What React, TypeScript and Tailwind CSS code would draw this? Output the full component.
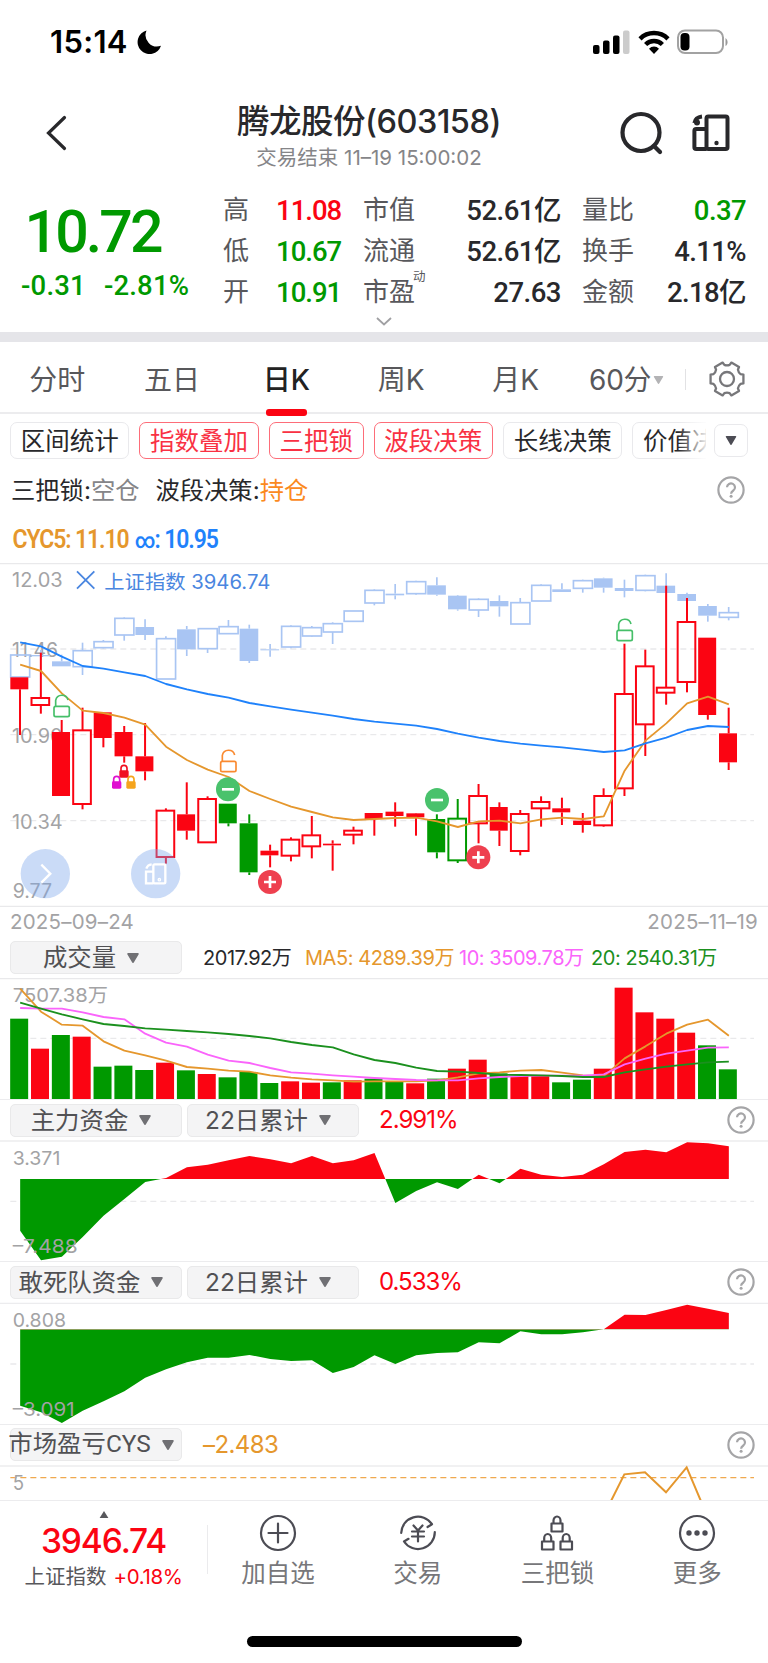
import { ReactNode } from "react";

type Candle = [kind: string, high: number, top: number, bottom: number, low: number];

// all chart coordinates are in device pixels, three to one layout pixel
const STEP = 62.53;
const cx = (i: number) => 60.5 + i * STEP;

const RED = "#fb0412";
const GREEN = "#009900";
const BLUE = "#a9c5f3";

const candles: Candle[] = [
  ["R", 352, 352, 388, 525],
  ["H", 278, 414, 435, 461],
  ["R", 480, 516, 708, 708],
  ["H", 443, 511, 732, 748],
  ["R", 457, 457, 534, 562],
  ["R", 498, 516, 589, 608],
  ["R", 489, 589, 634, 661],
  ["H", 745, 752, 891, 911],
  ["R", 667, 763, 812, 839],
  ["H", 709, 717, 847, 847],
  ["G", 731, 731, 790, 799],
  ["G", 763, 790, 937, 945],
  ["R", 854, 872, 886, 922],
  ["H", 832, 839, 887, 904],
  ["H", 768, 826, 859, 895],
  ["R", 841, 851, 856, 932],
  ["H", 800, 812, 824, 853],
  ["R", 759, 759, 777, 827],
  ["R", 727, 755, 768, 800],
  ["R", 759, 760, 772, 827],
  ["G", 763, 777, 877, 895],
  ["g", 717, 776, 901, 909],
  ["H", 672, 708, 790, 850],
  ["R", 727, 741, 812, 858],
  ["H", 750, 762, 873, 886],
  ["H", 709, 726, 745, 800],
  ["R", 713, 745, 757, 795],
  ["R", 759, 782, 795, 818],
  ["H", 685, 708, 796, 800],
  ["H", 251, 402, 685, 708],
  ["H", 269, 319, 493, 588],
  ["H", 77, 383, 398, 434],
  ["H", 114, 186, 366, 397],
  ["R", 233, 233, 465, 479],
  ["R", 443, 520, 607, 630],
];

const indexCandles: Candle[] = [
  ["H", 284, 285, 351, 351],
  ["R", 270, 285, 289, 300],
  ["R", 284, 304, 319, 319],
  ["H", 248, 272, 320, 345],
  ["H", 240, 245, 263, 265],
  ["H", 172, 175, 225, 242],
  ["R", 178, 201, 225, 240],
  ["H", 229, 236, 357, 357],
  ["R", 198, 208, 268, 288],
  ["H", 206, 206, 266, 279],
  ["H", 180, 200, 221, 221],
  ["R", 194, 206, 303, 309],
  ["R", 252, 268, 271, 290],
  ["H", 196, 199, 261, 265],
  ["H", 198, 203, 228, 230],
  ["H", 187, 191, 216, 252],
  ["H", 153, 153, 184, 184],
  ["H", 88, 91, 129, 136],
  ["R", 72, 101, 106, 118],
  ["H", 62, 65, 101, 104],
  ["R", 52, 76, 104, 107],
  ["R", 105, 107, 148, 152],
  ["H", 115, 118, 150, 171],
  ["R", 106, 123, 139, 170],
  ["H", 114, 128, 192, 192],
  ["H", 73, 76, 123, 124],
  ["R", 70, 88, 96, 96],
  ["H", 59, 62, 85, 98],
  ["R", 53, 55, 83, 98],
  ["R", 59, 84, 93, 112],
  ["H", 44, 47, 91, 94],
  ["R", 40, 77, 99, 99],
  ["R", 98, 102, 123, 123],
  ["R", 132, 138, 167, 185],
  ["H", 141, 158, 172, 181],
];

const costLine = [
  247, 259, 290, 318, 326, 337, 348, 372, 388, 402, 413, 429, 439, 449, 458, 467, 477, 485, 491,
  497, 507, 521, 533, 543, 551, 557, 562, 569, 576, 571, 550, 533, 510, 498, 501,
];
const cycLine = [
  314, 333, 400, 452, 459, 473, 494, 560, 600, 629, 651, 693, 717, 740, 756, 772, 780, 777, 774,
  773, 784, 801, 784, 782, 790, 778, 773, 777, 769, 632, 542, 490, 430, 410, 433,
];

const volumes = [
  357, 447, 406, 411, 501, 498, 511, 489, 512, 523, 533, 517, 550, 545, 549, 548, 542, 537, 547,
  551, 537, 507, 480, 521, 529, 529, 548, 540, 507, 264, 338, 357, 399, 437, 509,
];
const volumeKinds = "GRGRGGGRGRGGGRRGRGGRGRRGRRGGRRRRRGG";
const ma5 = [
  267, 336, 375, 378, 425, 453, 467, 483, 502, 507, 513, 516, 527, 534, 539, 542, 546, 545, 545,
  545, 542, 533, 521, 518, 513, 511, 519, 527, 530, 476, 440, 402, 375, 360, 408,
];
const ma10 = [
  325, 327, 327, 338, 352, 359, 402, 429, 441, 465, 483, 490, 505, 518, 522, 527, 531, 535, 538,
  541, 542, 542, 536, 532, 529, 528, 528, 528, 524, 494, 477, 462, 453, 444, 443,
];
const ma20 = [
  309, 327, 344, 359, 373, 379, 386, 390, 394, 398, 403, 409, 416, 427, 436, 443, 464, 481, 490,
  504, 514, 516, 520, 525, 526, 527, 529, 532, 532, 518, 509, 501, 494, 488, 486,
];

const mainFund = [
  422, 511, 500, 441, 377, 327, 276, 264, 232, 224, 211, 198, 208, 220, 198, 220, 211, 189, 339,
  303, 277, 297, 254, 280, 236, 254, 261, 254, 223, 186, 179, 187, 157, 160, 169,
];
const braveFund = [
  437, 457, 489, 452, 424, 394, 353, 328, 307, 293, 293, 285, 297, 303, 301, 339, 321, 286, 312,
  286, 279, 277, 247, 250, 214, 223, 223, 217, 208, 164, 165, 150, 134, 146, 159,
];

const linePoints = (data: number[]) => data.map((y, i) => `${cx(i)},${y}`).join(" ");

const Line = ({ data, color }: { data: number[]; color: string }) => (
  <polyline
    points={linePoints(data)}
    fill="none"
    stroke={color}
    strokeWidth={5.5}
    strokeLinejoin="round"
  />
);

const Dash = ({ y, color = "#e9e9eb" }: { y: number; color?: string }) => (
  <line x1={31} x2={2262} y1={y} y2={y} stroke={color} strokeWidth={4} strokeDasharray="18 12" />
);

const Label = ({
  x,
  y,
  width,
  size = 59,
  color = "#a3a3a5",
  children,
}: {
  x: number;
  y: number;
  width: number;
  size?: number;
  color?: string;
  children: ReactNode;
}) => (
  <text
    x={x}
    y={y}
    fontSize={size}
    fill={color}
    textLength={width}
    lengthAdjust="spacingAndGlyphs"
  >
    {children}
  </text>
);

const Candles = ({ data, index }: { data: Candle[]; index?: boolean }) => (
  <>
    {data.map(([kind, high, top, bottom, low], i) => {
      const color = index ? BLUE : kind.toUpperCase() === "G" ? GREEN : RED;
      const filled = kind === "R" || kind === "G";
      const x = cx(i) - 0.5;
      return (
        <g key={i} stroke={color} strokeWidth={index ? 5 : 6}>
          {high < top && <line x1={x} x2={x} y1={high} y2={top} />}
          {low > bottom && <line x1={x} x2={x} y1={bottom} y2={low} />}
          {filled ? (
            <rect x={x - 29} y={top} width={index ? 56 : 54} height={bottom - top} fill={color} stroke="none" />
          ) : (
            <rect x={x - 28} y={top} width={index ? 57 : 53} height={bottom - top} fill="none" />
          )}
        </g>
      );
    })}
  </>
);

const OpenLock = ({ x, y, color }: { x: number; y: number; color: string }) => (
  <g transform={`translate(${x} ${y})`} fill="none" stroke={color} strokeWidth={5}>
    <rect x={-23} y={36} width={46} height={31} rx={5} />
    <path d="M-18 36V18a19 19 0 0 1 37-1" />
  </g>
);

const SmallLock = ({ x, y, color }: { x: number; y: number; color: string }) => (
  <g transform={`translate(${x} ${y})`}>
    <rect x={-14} y={16} width={28} height={22} rx={4} fill={color} />
    <path d="M-9 18V10a9 9 0 0 1 18 0v8" fill="none" stroke={color} strokeWidth={5} />
  </g>
);

const Signal = ({ x, y, buy }: { x: number; y: number; buy?: boolean }) => (
  <g transform={`translate(${x} ${y})`}>
    <circle r={36} fill={buy ? "#ee404f" : "#49c26c"} />
    <path d={buy ? "M-18 0H18M0-18V18" : "M-18 0H18"} stroke="#fff" strokeWidth={8} />
  </g>
);

const AreaChart = ({ id, data, zero }: { id: string; data: number[]; zero: number }) => {
  const points = `${cx(0)},${zero} ${linePoints(data)} ${cx(34)},${zero}`;
  return (
    <>
      <clipPath id={`${id}-up`}>
        <rect x={0} y={0} width={2304} height={zero} />
      </clipPath>
      <clipPath id={`${id}-down`}>
        <rect x={0} y={zero} width={2304} height={600} />
      </clipPath>
      <polygon points={points} fill={GREEN} clipPath={`url(#${id}-down)`} />
      <polygon points={points} fill={RED} clipPath={`url(#${id}-up)`} />
    </>
  );
};

const GridIcon = ({ className }: { className: string }) => (
  <svg viewBox="0 0 38 38" className={className} fill="none" stroke="currentColor" strokeWidth={4}>
    <rect x={14.5} y={2.500} width={21} height={32.500} rx={1.800} />
    <path d="M14.500 15H4.200a1.800 1.800 0 0 0-1.800 1.800v16.400A1.800 1.800 0 0 0 4.200 35h10.300" />
    <path d="M10 2.500C6 3 3 5.500 2.400 9" />
    <circle cx={5} cy={8.400} r={3} fill="currentColor" stroke="none" />
    <circle cx={24.500} cy={29} r={2.200} fill="currentColor" stroke="none" />
  </svg>
);

const gearPath = (() => {
  const at = (deg: number, r: number) => {
    const a = (deg * Math.PI) / 180;
    return `${(19 + r * Math.cos(a)).toFixed(2)} ${(19 + r * Math.sin(a)).toFixed(2)}`;
  };
  let d = "";
  for (let a = 0; a < 360; a += 60) {
    d += `${a ? "L" : "M"}${at(a - 15, 17)}L${at(a + 15, 17)}`;
    d += `L${at(a + 19.5, 14.4)}A 7 7 0 0 0 ${at(a + 40.5, 14.4)}`;
  }
  return d + "Z";
})();

const GearIcon = () => (
  <svg viewBox="0 0 38 38" className="-mt-px size-[38px]" fill="none" stroke="#77777a" strokeWidth={2.3} strokeLinejoin="round">
    <path d={gearPath} />
    <circle cx={19} cy={19} r={7} />
  </svg>
);

const HelpIcon = () => (
  <svg viewBox="0 0 28 28" className="size-7" fill="none" stroke="#a5a5a7" strokeWidth={2.2}>
    <circle cx={14} cy={14} r={12.6} />
    <path d="M10 11.200a4 3.900 0 1 1 6.300 3.300c-1.500 1-2.200 1.600-2.200 3.200" />
    <circle cx={14.100} cy={20.300} r={1.500} fill="#a5a5a7" stroke="none" />
  </svg>
);

const Arrow = ({ className }: { className: string }) => (
  <svg viewBox="0 0 12 10" className={className} fill="currentColor">
    <path d="M1 0h10a.8.8 0 0 1 .7 1.200L6.800 9.500a1 1 0 0 1-1.600 0L.3 1.200A.8.800 0 0 1 1 0Z" />
  </svg>
);

const StatusBar = () => (
  <div className="flex h-[83px] items-center justify-between pr-[39px] pl-[50px]">
    <div className="flex items-center gap-[9px]">
      <span className="text-[31px] leading-none font-semibold tracking-[0.3px] text-black">15:14</span>
      <svg viewBox="0 0 24 24" className="size-6">
        <path d="M9.500.5A12 12 0 1 0 24 15.800 11.500 11.500 0 0 1 9.500.5Z" fill="#000" />
      </svg>
    </div>
    <div className="flex items-center gap-[7.500px]">
      <svg viewBox="0 0 37 24" className="h-6 w-[37px]">
        <rect x={0} y={15} width={6.500} height={9} rx={2} />
        <rect x={10} y={10.500} width={6.500} height={13.500} rx={2} />
        <rect x={20} y={5.500} width={6.500} height={18.500} rx={2} />
        <rect x={30} y={0.500} width={6.500} height={23.500} rx={2} fill="#ccc" />
      </svg>
      <svg viewBox="0 0 32 24" className="h-6 w-8" fill="none" stroke="#000" strokeWidth={4.500}>
        <path d="M2 8.800a20 20 0 0 1 28 0" />
        <path d="M7.600 14.500a12 12 0 0 1 16.800 0" />
        <path d="M11 18.700a7 7 0 0 1 10 0L16 24Z" fill="#000" stroke="none" />
      </svg>
      <svg viewBox="0 0 52 26" className="h-[26px] w-[52px]">
        <rect x={1} y={1.500} width={45} height={22.500} rx={7} fill="none" stroke="#a2a2a2" strokeWidth={2} />
        <rect x={3.500} y={4} width={9} height={17.500} rx={4} />
        <path d="M48.500 9v8c2.500-1 3-6 0-8Z" fill="#999" />
      </svg>
    </div>
  </div>
);

const Header = () => (
  <div className="flex h-[97px] items-start justify-between pr-[38px] pl-[45px]">
    <svg viewBox="0 0 22 36" className="mt-8 h-9 w-[22px]" fill="none" stroke="#28282b" strokeWidth={3.200} strokeLinecap="round">
      <path d="M19.500 2.500 3.500 18l16 15.500" />
    </svg>
    <div className="flex flex-col items-center pt-[19px] pl-[52px]">
      <h1 className="text-[32.5px] leading-10 font-medium tracking-[-0.5px] whitespace-nowrap text-[#28282b]">
        腾龙股份(603158)
      </h1>
      <p className="text-[20.5px] leading-8 whitespace-nowrap text-[#858588]">交易结束 11–19 15:00:02</p>
    </div>
    <div className="flex items-center gap-[29px] pt-[28px]">
      <svg viewBox="0 0 44 44" className="size-11" fill="none" stroke="#28282b" strokeWidth={4.200} strokeLinecap="round">
        <circle cx={22} cy={21.500} r={18.500} />
        <path d="m35 35 6 6" />
      </svg>
      <GridIcon className="size-[38px] text-[#28282b]" />
    </div>
  </div>
);

const quotes = [
  ["高", "11.08", "text-[#fb0412]", "市值", "52.61亿", "量比", "0.37", "text-[#009900]"],
  ["低", "10.67", "text-[#009900]", "流通", "52.61亿", "换手", "4.11%", "text-[#28282b]"],
  ["开", "10.91", "text-[#009900]", "市盈", "27.63", "金额", "2.18亿", "text-[#28282b]"],
];

const Quote = () => (
  <div className="relative flex h-[152px] font-[Roboto,'Noto_Sans_CJK_SC',sans-serif]">
    <div className="w-[223px] pt-[21px] text-[#009900]">
      <div className="pl-[24.500px] text-[59px] leading-[62px] font-medium tracking-[-2.900px]">10.72</div>
      <div className="flex gap-[18px] pt-[3px] pl-[21px] text-[27.5px] leading-10 font-medium tracking-[0.2px] whitespace-nowrap">
        <span>-0.31</span>
        <span>-2.81%</span>
      </div>
    </div>
    <div className="flex-1 pt-[10px] pr-[22px] text-[27.5px] leading-[41px] font-medium text-[#28282b]">
      {quotes.map((q) => (
        <div key={q[0]} className="flex h-[41px] whitespace-nowrap">
          <span className="w-[53px] text-[26px] font-normal text-[#58585c]">{q[0]}</span>
          <span className={`w-[87px] tracking-[-1px] ${q[2]}`}>{q[1]}</span>
          <span className="flex w-[87px] text-[26px] font-normal text-[#58585c]">
            {q[3]}
            {q[3] === "市盈" && <sup className="-top-[7px] -ml-0.5 text-[12.5px] leading-6">动</sup>}
          </span>
          <span className="w-[111px] text-right tracking-[-0.5px]">{q[4]}</span>
          <span className="ml-[21px] text-[26px] font-normal text-[#58585c]">{q[5]}</span>
          <span className={`flex-1 text-right tracking-[-0.6px] ${q[7]}`}>{q[6]}</span>
        </div>
      ))}
    </div>
    <svg viewBox="0 0 16 9" className="absolute bottom-[6px] left-[376px] h-[9px] w-4" fill="none" stroke="#a0a0a3" strokeWidth={1.800}>
      <path d="m1 1 7 6.500L15 1" />
    </svg>
  </div>
);

const periods = ["分时", "五日", "日K", "周K", "月K"];

const PeriodTabs = () => (
  <div className="flex h-[72px] items-center border-b-2 border-[#ececee] pt-[5px] text-[28px] leading-[72px] text-[#58585b]">
    {periods.map((p) => (
      <div key={p} className="relative w-[114.6px] text-center">
        {p === "日K" ? (
          <>
            <span className="font-medium text-[#222]">{p}</span>
            <span className="absolute bottom-0 left-[37px] h-[7px] w-[41px] rounded-[3px] bg-[#fb0412]" />
          </>
        ) : (
          <span>{p}</span>
        )}
      </div>
    ))}
    <div className="flex w-[112px] items-center pl-4 tracking-[-0.2px]">
      60分
      <Arrow className="ml-[2px] h-[8px] w-[11px] text-[#b3b3b5]" />
    </div>
    <div className="mr-[22px] h-[21px] w-px bg-[#e2e2e4]" />
    <GearIcon />
  </div>
);

const tags = [
  ["区间统计", false],
  ["指数叠加", true],
  ["三把锁", true],
  ["波段决策", true],
  ["长线决策", false],
  ["价值决策", false],
] as const;

const Tags = () => (
  <div className="flex h-[54px] pt-[8px] pl-[10px]">
    <div className="relative flex w-[696px] gap-[10px] overflow-hidden">
      {tags.map(([name, active]) => (
        <div
          key={name}
          className={`h-[37px] shrink-0 rounded-[7px] border-[1.5px] px-[9.700px] text-[24.500px] leading-[36px] ${
            active ? "border-[#fd6d79] text-[#f93143]" : "border-[#e9e9ec] text-[#28282b]"
          }`}
        >
          {name}
        </div>
      ))}
      <div className="absolute right-0 h-full w-7 bg-linear-to-r from-white/0 to-white/90" />
    </div>
    <div className="mt-[2px] ml-[8px] flex h-[33px] w-[34px] items-center justify-center rounded-[7px] border-[1.5px] border-[#e9e9ec]">
      <Arrow className="h-[9px] w-3 text-[#4c4c54]" />
    </div>
  </div>
);

const Dropdown = ({ children, className = "" }: { children: ReactNode; className?: string }) => (
  <div
    className={`flex h-[33px] w-[172px] items-center justify-center gap-[11px] rounded-[5px] border border-[#e9e9ea] bg-[#f4f4f5] pr-[10px] text-[24.4px] whitespace-nowrap text-[#515154] ${className}`}
  >
    {children}
    <Arrow className="h-[10px] w-3 shrink-0 text-[#707074]" />
  </div>
);

const MainChart = () => (
  <svg viewBox="0 9 2304 1032" className="block h-[344px] w-[768px]">
    <line x1={0} x2={2304} y1={11} y2={11} stroke="#e9e9eb" strokeWidth={4} />
    <line x1={0} x2={2304} y1={1039} y2={1039} stroke="#e9e9eb" strokeWidth={4} />
    <Dash y={267} />
    <Dash y={524} />
    <Dash y={782} />
    <Label x={36} y={82} width={152}>12.03</Label>
    <Label x={36} y={291} width={138}>11.46</Label>
    <Label x={36} y={549} width={152}>10.90</Label>
    <Label x={36} y={807} width={152}>10.34</Label>
    <Candles data={indexCandles} index />
    <Candles data={candles} />
    <Line data={cycLine} color="#e5972d" />
    <Line data={costLine} color="#1f82fb" />
    <Label x={38} y={1013} width={118}>9.77</Label>
    <path d="M231 34 283 86M283 34 231 86" stroke="#4a86e0" strokeWidth={5.5} />
    <Label x={313} y={86} width={498} color="#4a86e0">上证指数 3946.74</Label>
    <OpenLock x={185} y={403} color="#46bf69" />
    <OpenLock x={685} y={568} color="#fa8a30" />
    <OpenLock x={1874} y={175} color="#46bf69" />
    <SmallLock x={372} y={615} color="#f01020" />
    <SmallLock x={350} y={648} color="#e010d0" />
    <SmallLock x={393} y={648} color="#f5a41c" />
    <Signal x={684} y={688} />
    <Signal x={810} y={966} buy />
    <Signal x={1311} y={720} />
    <Signal x={1435} y={892} buy />
    <circle cx={136} cy={941} r={74} fill="#7ba6ec" fillOpacity={0.4} />
    <path d="m124 914 27 27-27 27" fill="none" stroke="#fff" strokeWidth={7} />
    <circle cx={467} cy={941} r={74} fill="#7ba6ec" fillOpacity={0.4} />
    <g fill="none" stroke="#fff" strokeWidth={7}>
      <rect x={460} y={913} width={36} height={57} rx={4} />
      <path d="M460 935H438v35h22M455 913c-8 1-14 6-16 13" />
      <circle cx={478} cy={959} r={2} />
    </g>
  </svg>
);

const VolumeChart = () => (
  <svg viewBox="0 235 2304 363" className="block h-[121px] w-[768px]">
    <line x1={0} x2={2304} y1={237} y2={237} stroke="#e9e9eb" strokeWidth={4} />
    <Dash y={416} />
    <Label x={38} y={308} width={286} size={58}>7507.38万</Label>
    {volumes.map((y, i) => (
      <rect key={i} x={cx(i) - 30} y={y} width={54} height={599 - y} fill={volumeKinds[i] === "G" ? GREEN : RED} />
    ))}
    <Line data={ma5} color="#e5972d" />
    <Line data={ma10} color="#fa64fb" />
    <Line data={ma20} color="#1b901e" />
  </svg>
);

const App = () => (
  <div className="h-[1663px] w-[768px] overflow-hidden bg-white font-[Inter,'Noto_Sans_CJK_SC',sans-serif] text-[#28282b]">
    <StatusBar />
    <Header />
    <Quote />
    <div className="h-[10px] bg-[#e5e5e9]" />
    <PeriodTabs />
    <Tags />
    <div className="flex h-[44px] items-center pr-[23px] pl-[11px] text-[24.3px] leading-[44px]">
      <span>三把锁:</span>
      <span className="text-[#858588]">空仓</span>
      <span className="ml-[16px]">波段决策:</span>
      <span className="mr-auto text-[#fb8a1e]">持仓</span>
      <HelpIcon />
    </div>
    <div className="flex h-[51px] origin-left scale-x-[0.9] items-center gap-[7px] pt-[4px] pl-[14px] font-[Roboto,sans-serif] text-[25.5px] font-semibold tracking-[-1.200px]">
      <span className="text-[#e5972d]">CYC5: 11.10</span>
      <span className="text-[#1f82fb]">
        <span className="text-[22px]">∞</span>: 10.95
      </span>
    </div>
    <MainChart />

    <div className="flex h-[33px] items-start justify-between pt-px pr-[10px] pl-[10px] text-[20.5px] leading-[28px] tracking-[0.2px] text-[#a3a3a5]">
      <span>2025–09–24</span>
      <span>2025–11–19</span>
    </div>
    <div className="flex h-[38px] items-start pt-px pl-[10px] text-[20px] leading-[35px] tracking-[-0.45px] whitespace-nowrap">
      <Dropdown className="mr-[21px] tracking-normal">成交量</Dropdown>
      <span className="w-[102px]">2017.92万</span>
      <span className="w-[154px] text-[#e5972d]">MA5: 4289.39万</span>
      <span className="w-[132px] text-[#fa64fb]">10: 3509.78万</span>
      <span className="text-[#1b901e]">20: 2540.31万</span>
    </div>
    <VolumeChart />

    <div className="flex h-[41px] items-center border-t border-[#ececee] pr-[13px] pl-[10px]">
      <Dropdown className="mr-[5px]">主力资金</Dropdown>
      <Dropdown>22日累计</Dropdown>
      <span className="mr-auto ml-[20px] text-[24px] tracking-[-1px] text-[#fb0412]">2.991%</span>
      <HelpIcon />
    </div>
    <svg viewBox="0 150 2304 363" className="block h-[121px] w-[768px]">
      <line x1={0} x2={2304} y1={153} y2={153} stroke="#ececee" strokeWidth={4} />
      <Dash y={334} />
      <AreaChart id="main" data={mainFund} zero={267} />
      <Label x={38} y={224} width={143} size={58}>3.371</Label>
      <Label x={38} y={490} width={195} size={58}>–7.488</Label>
    </svg>

    <div className="flex h-[41px] items-center border-t border-[#ececee] pr-[13px] pl-[10px]">
      <Dropdown className="mr-[5px]">敢死队资金</Dropdown>
      <Dropdown>22日累计</Dropdown>
      <span className="mr-auto ml-[20px] text-[24px] tracking-[-1px] text-[#fb0412]">0.533%</span>
      <HelpIcon />
    </div>
    <svg viewBox="0 126 2304 366" className="block h-[122px] w-[768px]">
      <line x1={0} x2={2304} y1={130} y2={130} stroke="#ececee" strokeWidth={4} />
      <Dash y={312} />
      <AreaChart id="brave" data={braveFund} zero={208} />
      <Label x={38} y={201} width={160} size={58}>0.808</Label>
      <Label x={38} y={467} width={186} size={58}>–3.091</Label>
    </svg>

    <div className="flex h-[41px] items-center border-t border-[#ececee] pr-[13px] pb-px pl-[10px]">
      <Dropdown className="font-[Roboto,'Noto_Sans_CJK_SC',sans-serif] text-[22.8px]">市场盈亏CYS</Dropdown>
      <span className="mr-auto ml-[21px] text-[24px] tracking-[-0.6px] text-[#e5972d]">–2.483</span>
      <HelpIcon />
    </div>
    <svg viewBox="0 120 2304 105" className="block h-[35px] w-[768px]">
      <line x1={0} x2={2304} y1={123} y2={123} stroke="#ececee" strokeWidth={4} />
      <Dash y={158} color="#f0a94e" />
      <Label x={38} y={194} width={34}>5</Label>
      <polyline points="1810,274 1873,148 1935,142 1998,202 2060,127 2123,276" fill="none" stroke="#e5972d" strokeWidth={6} />
    </svg>

    <div className="flex h-[112px] border-t border-[#ececee] pt-[10px]">
      <div className="flex w-[207px] flex-col items-center">
        <svg viewBox="0 0 10 8" className="h-[7px] w-[10px]">
          <path d="M5 0 10 8H0Z" fill="#58585c" />
        </svg>
        <div className="mt-[3px] text-[33.500px] leading-10 font-medium tracking-[-1.100px] text-[#fb0412]">3946.74</div>
        <div className="flex gap-[7px] text-[20.5px] leading-8 whitespace-nowrap">
          <span className="text-[#58585c]">上证指数</span>
          <span className="tracking-[-0.4px] text-[#fb0412]">+0.18%</span>
        </div>
      </div>
      <div className="mt-[14px] h-[49px] w-px bg-[#ebebed]" />
      {toolbar.map(({ name, icon }) => (
        <div key={name} className="flex w-[139.800px] flex-col items-center text-[24.5px] leading-9 text-[#77777a]">
          <svg viewBox="0 0 38 38" className="mt-[3px] mb-[3px] size-[38px]" fill="none" stroke="#4c4c54" strokeWidth={2.200} strokeLinecap="round" strokeLinejoin="round">
            {icon}
          </svg>
          {name}
        </div>
      ))}
    </div>
    <div className="mx-auto mt-[24px] h-[11px] w-[275px] rounded-full bg-black" />
  </div>
);

const toolbar = [
  {
    name: "加自选",
    icon: (
      <>
        <circle cx={19} cy={19} r={17} />
        <path d="M9.500 19h19M19 9.500v19" />
      </>
    ),
  },
  {
    name: "交易",
    icon: (
      <>
        <path d="M2.200 19A16.800 16.800 0 0 1 33 10.200L28.500 13M35.800 18A16.800 16.800 0 0 1 5 27.500l4.500-2.700" />
        <path d="m14.500 11.500 4.500 5 4.500-5M13 17.500h12M13 22.500h12M19 17v10.500" />
      </>
    ),
  },
  {
    name: "三把锁",
    icon: (
      <>
        <path d="M13.500 9.500h11v8h-11zM15.500 9.500V6.500a3.500 4 0 0 1 7 0v3" />
        <path d="M4 27.500h11.500v8H4zM6.200 27.500V24a3.500 4 0 0 1 7 0v3.500" />
        <path d="M22.500 27.500H34v8H22.500zM24.700 27.500V24a3.500 4 0 0 1 7 0v3.500" />
      </>
    ),
  },
  {
    name: "更多",
    icon: (
      <>
        <circle cx={19} cy={19} r={17} />
        <g fill="#4c4c54" stroke="none">
          <circle cx={11} cy={19} r={2.700} />
          <circle cx={19} cy={19} r={2.700} />
          <circle cx={27} cy={19} r={2.700} />
        </g>
      </>
    ),
  },
];

export default App;
